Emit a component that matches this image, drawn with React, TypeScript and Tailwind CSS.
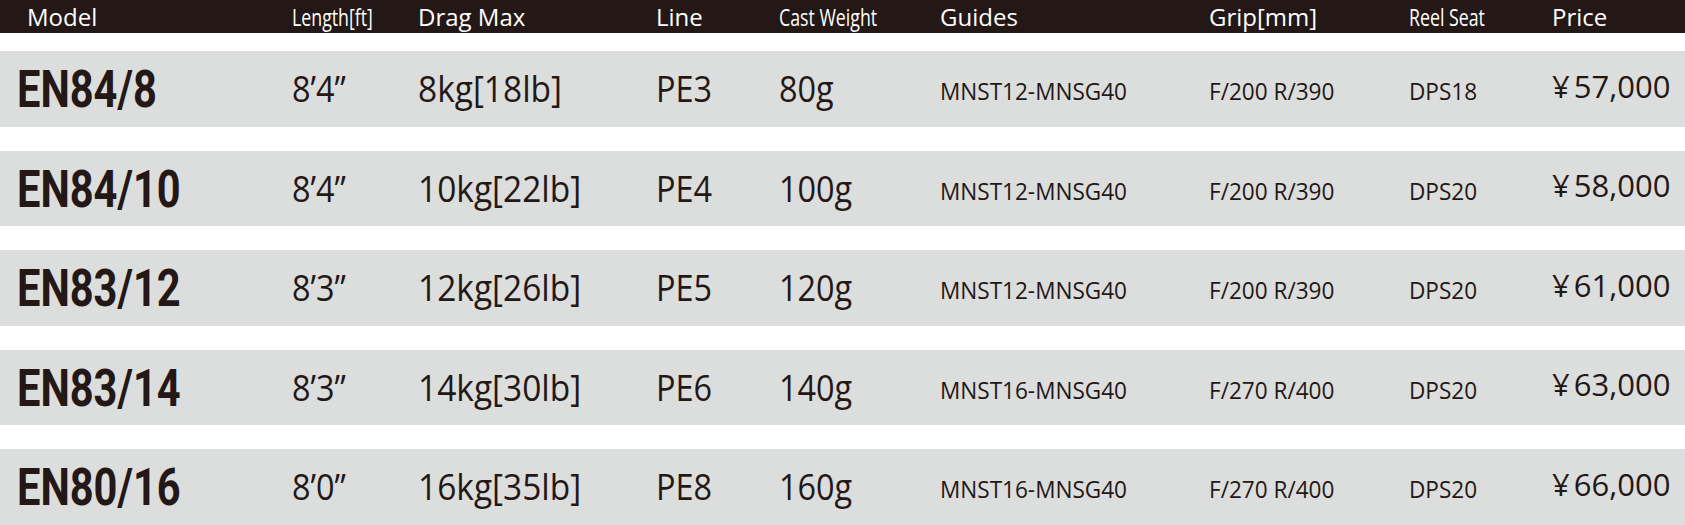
import React from "react";

const rows = [
  { model: "EN84/8", len: "8’4”", drag: "8kg[18lb]", line: "PE3", cast: "80g", guides: "MNST12-MNSG40", grip: "F/200 R/390", seat: "DPS18", price: "57,000", h: "h-[76px]" },
  { model: "EN84/10", len: "8’4”", drag: "10kg[22lb]", line: "PE4", cast: "100g", guides: "MNST12-MNSG40", grip: "F/200 R/390", seat: "DPS20", price: "58,000", h: "h-[75px]" },
  { model: "EN83/12", len: "8’3”", drag: "12kg[26lb]", line: "PE5", cast: "120g", guides: "MNST12-MNSG40", grip: "F/200 R/390", seat: "DPS20", price: "61,000", h: "h-[76px]" },
  { model: "EN83/14", len: "8’3”", drag: "14kg[30lb]", line: "PE6", cast: "140g", guides: "MNST16-MNSG40", grip: "F/270 R/400", seat: "DPS20", price: "63,000", h: "h-[75px]" },
  { model: "EN80/16", len: "8’0”", drag: "16kg[35lb]", line: "PE8", cast: "160g", guides: "MNST16-MNSG40", grip: "F/270 R/400", seat: "DPS20", price: "66,000", h: "h-[76px]" },
];

const cols = "grid grid-cols-[292px_126px_238px_123px_161px_269px_200px_143px_1fr]";

function Cond({ children }: { children: React.ReactNode }) {
  return <span className="inline-block origin-left scale-x-[0.74] whitespace-nowrap">{children}</span>;
}

function Big({ children, wide }: { children: React.ReactNode; wide?: boolean }) {
  return (
    <span className={wide ? "inline-block origin-left scale-x-[0.93] text-[36px]" : "inline-block origin-left scale-x-[0.9] text-[36px]"}>
      {children}
    </span>
  );
}

function Small({ children }: { children: React.ReactNode }) {
  return <span className="inline-block origin-left scale-x-[0.94] text-[24px]">{children}</span>;
}

export default function App() {
  return (
    <div className="w-[1685px] h-[525px] bg-white overflow-hidden font-['Open_Sans',sans-serif] text-[#231815]">
      <div className={`${cols} h-[33px] bg-[#231815] text-white text-[24px] leading-none items-center`}>
        <div className="pl-[27px]">Model</div>
        <div><Cond>Length[ft]</Cond></div>
        <div>Drag Max</div>
        <div>Line</div>
        <div><Cond>Cast Weight</Cond></div>
        <div>Guides</div>
        <div>Grip[mm]</div>
        <div><Cond>Reel Seat</Cond></div>
        <div>Price</div>
      </div>
      <div className="flex flex-col gap-[24px] pt-[18px]">
        {rows.map((r) => (
          <div key={r.model} className={`${cols} ${r.h} bg-[#dcdddd] items-center leading-none whitespace-nowrap`}>
            <div className="pl-[17px] pt-[2px]">
              <span className="inline-block origin-left scale-x-[0.8] font-['Roboto',sans-serif] font-bold text-[52px]">{r.model}</span>
            </div>
            <div><Big>{r.len}</Big></div>
            <div><Big wide>{r.drag}</Big></div>
            <div><Big>{r.line}</Big></div>
            <div><Big>{r.cast}</Big></div>
            <div className="pt-[4px]"><Small>{r.guides}</Small></div>
            <div className="pt-[4px]"><Small>{r.grip}</Small></div>
            <div className="pt-[4px]"><Small>{r.seat}</Small></div>
            <div className="text-[31px] pb-[6px]">
              <span>¥</span>
              <span className="ml-[4px]">{r.price}</span>
            </div>
          </div>
        ))}
      </div>
    </div>
  );
}
